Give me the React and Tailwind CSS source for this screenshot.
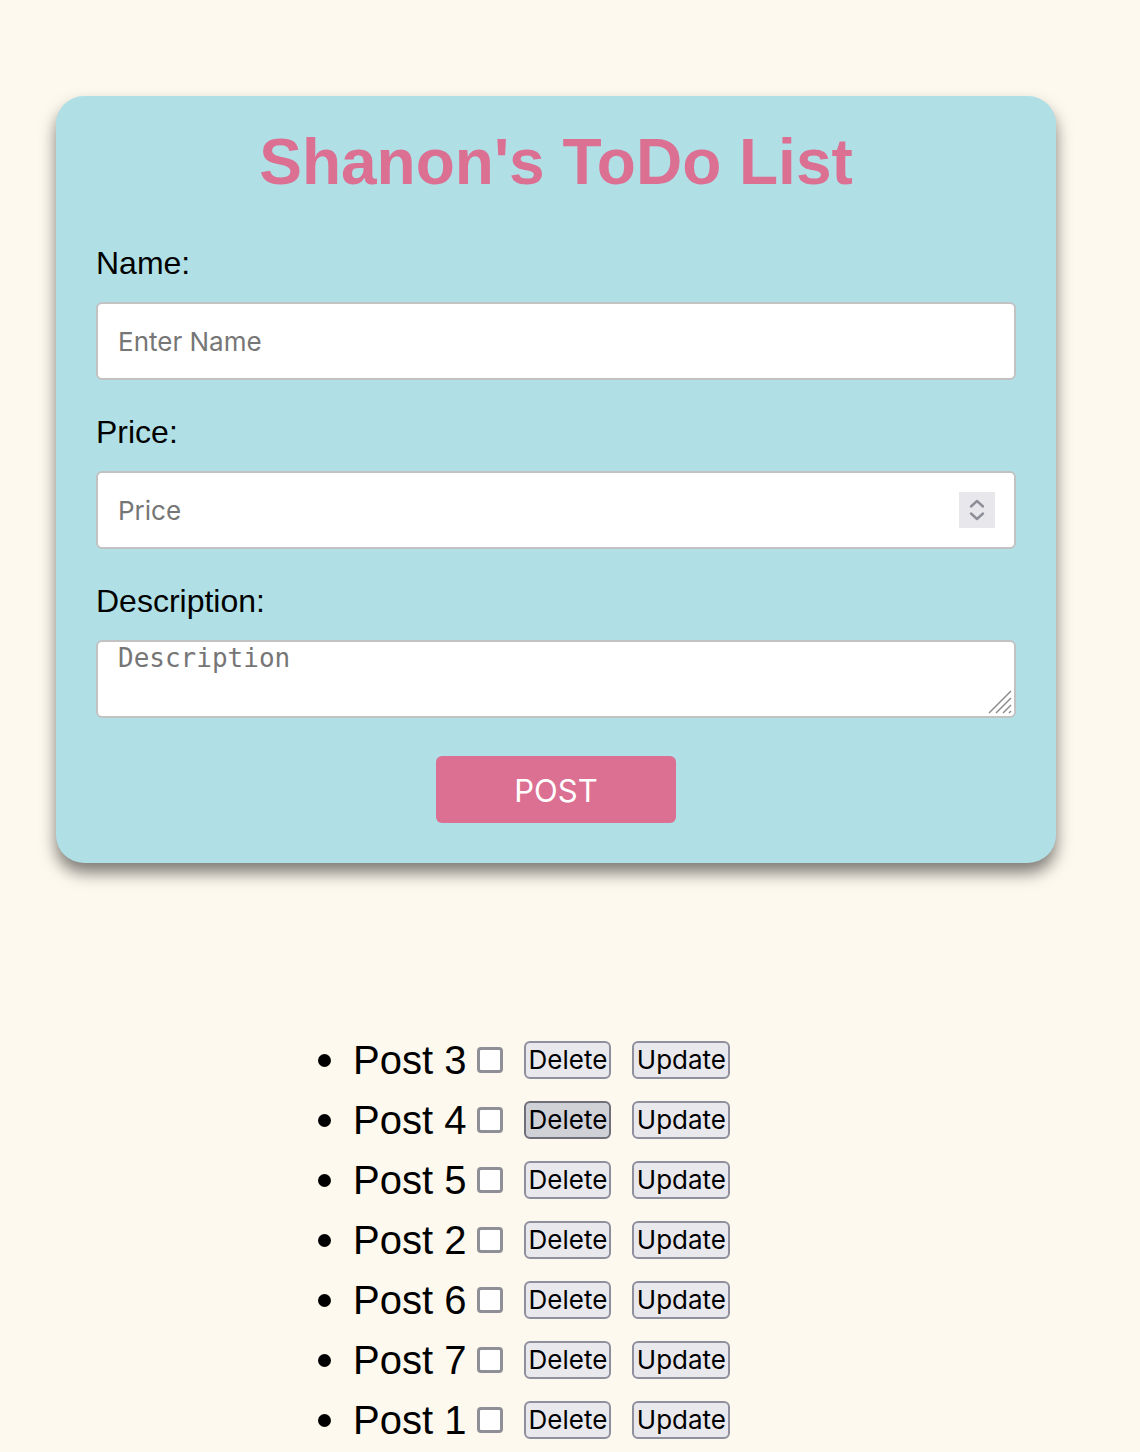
const posts = ["Post 3", "Post 4", "Post 5", "Post 2", "Post 6", "Post 7", "Post 1"];

function Spinner() {
  return (
    <div className="flex h-[36px] w-[36px] items-center justify-center bg-[#e8e8ec]">
      <svg width="36" height="36" viewBox="0 0 36 36" fill="none">
        <path d="M12 14.5 L18 9 L24 14.5" stroke="#8e8e98" strokeWidth="2.4" strokeLinecap="round" strokeLinejoin="round" />
        <path d="M12 21.5 L18 27 L24 21.5" stroke="#8e8e98" strokeWidth="2.4" strokeLinecap="round" strokeLinejoin="round" />
      </svg>
    </div>
  );
}

function ResizeGrip() {
  return (
    <svg
      className="pointer-events-none absolute bottom-[4px] right-[4px]"
      width="24"
      height="24"
      viewBox="0 0 24 24"
      fill="none"
    >
      <path d="M1 23 L23 1" stroke="#8a8a8a" strokeWidth="1.5" />
      <path d="M8 23 L23 8" stroke="#8a8a8a" strokeWidth="1.5" />
      <path d="M15 23 L23 15" stroke="#8a8a8a" strokeWidth="1.5" />
      <path d="M21 23 L23 21" stroke="#8a8a8a" strokeWidth="1.5" />
    </svg>
  );
}

function PostRow({ title, hovered }) {
  return (
    <li className="flex h-[60px] items-center">
      <span className="h-[13px] w-[13px] rounded-full bg-black" />
      <span className="ml-[22px] text-[40px] leading-none">{title}</span>
      <input
        type="checkbox"
        className="m-0 ml-[11px] h-[26px] w-[26px] appearance-none rounded-[4px] border-[3px] border-[#8f8f97] bg-white"
      />
      <button
        className={
          hovered
            ? "ml-[21px] h-[38px] w-[87px] rounded-[6px] border-2 border-[#6f6f7a] bg-[#d0d0d7] font-['Inter'] text-[26px] leading-none"
            : "ml-[21px] h-[38px] w-[87px] rounded-[6px] border-2 border-[#8f8f9d] bg-[#e9e9ed] font-['Inter'] text-[26px] leading-none"
        }
      >
        Delete
      </button>
      <button className="ml-[21px] h-[38px] w-[98px] rounded-[6px] border-2 border-[#8f8f9d] bg-[#e9e9ed] font-['Inter'] text-[26px] leading-none">
        Update
      </button>
    </li>
  );
}

export default function App() {
  return (
    <div className="min-h-[1452px] bg-[#fef9ee] pt-[96px] font-['Liberation_Sans',Arial,sans-serif] text-black">
      <div className="ml-[56px] w-[1000px] rounded-[28px] bg-[#b0e0e6] px-[40px] pt-[29px] pb-[40px] shadow-[0_10px_16px_rgba(0,0,0,0.5)]">
        <h1 className="text-center text-[64px] font-bold leading-[74px] text-[#db7093]">
          Shanon's ToDo List
        </h1>

        <label className="mt-[46px] block text-[32px] leading-[37px]">Name:</label>
        <input
          placeholder="Enter Name"
          className="mt-[20px] block h-[78px] w-full rounded-[6px] border-2 border-[#c2c2c2] bg-white px-[20px] font-['Inter'] text-[26px] outline-none placeholder:text-[#767676]"
        />

        <label className="mt-[34px] block text-[32px] leading-[37px]">Price:</label>
        <div className="mt-[20px] flex h-[78px] w-full items-center rounded-[6px] border-2 border-[#c2c2c2] bg-white pl-[20px] pr-[19px]">
          <input
            placeholder="Price"
            className="min-w-0 flex-1 bg-transparent font-['Inter'] text-[26px] outline-none placeholder:text-[#767676]"
          />
          <Spinner />
        </div>

        <label className="mt-[34px] block text-[32px] leading-[37px]">Description:</label>
        <div className="relative mt-[20px]">
          <textarea
            placeholder="Description"
            className="block h-[78px] w-full resize-none rounded-[6px] border-2 border-[#c2c2c2] bg-white px-[20px] pt-[1px] font-['DejaVu_Sans_Mono',monospace] text-[26px] leading-[30px] outline-none placeholder:text-[#767676]"
          />
          <ResizeGrip />
        </div>

        <div className="mt-[38px] flex justify-center">
          <button className="h-[67px] w-[240px] rounded-[6px] bg-[#db7093] pt-[3px] font-['Inter'] text-[31px] text-white">
            POST
          </button>
        </div>
      </div>

      <ul className="ml-[318px] mt-[167px]">
        {posts.map((p, i) => (
          <PostRow key={p} title={p} hovered={i === 1} />
        ))}
      </ul>
    </div>
  );
}
